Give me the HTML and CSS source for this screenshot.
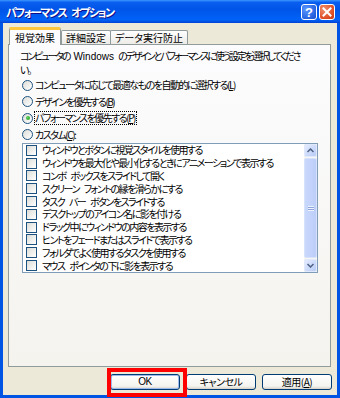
FILE: index.html
```html
<!DOCTYPE html>
<html>
	<head>
		<meta charset="UTF-8">
		<title>パフォーマンス オプション</title>
		<link rel="stylesheet" href="styles.css">
	</head>
	<body>
		<div class="window">
			<div class="titlebar">
				<span class="title">パフォーマンス オプション</span>
				<div class="caption">
					<span class="cbtn help">?</span>
					<span class="cbtn close">
						<svg width="10" height="10" viewBox="0 0 10 10"><path d="M1.5 1.5 L8.5 8.5 M8.5 1.5 L1.5 8.5" stroke="#fff" stroke-width="2" stroke-linecap="square"/></svg>
					</span>
				</div>
			</div>
			<div class="client">
				<div class="tabs">
					<div class="tab active">視覚効果</div>
					<div class="tab">詳細設定</div>
					<div class="tab">データ実行防止</div>
				</div>
				<div class="panel">
					<p class="desc">コンピュータの <span class="latin">Windows</span> のデザインとパフォーマンスに使う設定を選択してくださ<br>い。</p>
					<ul class="radios">
						<li><span class="radio"></span>コンピュータに応じて最適なものを自動的に選択する(<u>L</u>)</li>
						<li><span class="radio"></span>デザインを優先する(<u>B</u>)</li>
						<li><span class="radio on"></span><span class="focus">パフォーマンスを優先する(<u>P</u>)</span></li>
						<li><span class="radio"></span>カスタム(<u>C</u>):</li>
					</ul>
					<div class="listbox">
						<ul class="items">
							<li><span class="check"></span>ウィンドウとボタンに視覚スタイルを使用する</li>
							<li><span class="check"></span>ウィンドウを最大化や最小化するときにアニメーションで表示する</li>
							<li><span class="check"></span>コンボ ボックスをスライドして開く</li>
							<li><span class="check"></span>スクリーン フォントの縁を滑らかにする</li>
							<li><span class="check"></span>タスク バー ボタンをスライドする</li>
							<li><span class="check"></span>デスクトップのアイコン名に影を付ける</li>
							<li><span class="check"></span>ドラッグ中にウィンドウの内容を表示する</li>
							<li><span class="check"></span>ヒントをフェードまたはスライドで表示する</li>
							<li><span class="check"></span>フォルダでよく使用するタスクを使用する</li>
							<li><span class="check"></span>マウス ポインタの下に影を表示する</li>
						</ul>
						<div class="scrollbar">
							<span class="sbtn">
								<svg width="7" height="5" viewBox="0 0 7 5"><path d="M0.5 4 L3.5 1 L6.5 4" fill="none" stroke="#4d6185" stroke-width="1.5"/></svg>
							</span>
							<div class="track">
								<div class="thumb"><span class="grip"></span></div>
							</div>
							<span class="sbtn">
								<svg width="7" height="5" viewBox="0 0 7 5"><path d="M0.5 1 L3.5 4 L6.5 1" fill="none" stroke="#4d6185" stroke-width="1.5"/></svg>
							</span>
						</div>
					</div>
				</div>
				<div class="buttons">
					<span class="btn default">OK</span>
					<span class="btn">キャンセル</span>
					<span class="btn">適用(<u>A</u>)</span>
				</div>
			</div>
			<div class="highlight"></div>
		</div>
	</body>
</html>
```

FILE: styles.css
```css
body{
	margin: 0;
	font-family: "Noto Sans CJK JP", "Liberation Sans", sans-serif;
	font-size: 10px;
	font-feature-settings: "palt";
	color: #000;
}
ul{
	margin: 0;
	padding: 0;
	list-style: none;
}
.window{
	position: relative;
	width: 340px;
	height: 398px;
	box-sizing: border-box;
	display: flex;
	flex-direction: column;
	background-color: #0054e3;
	padding: 0 3px 3px 3px;
}
.titlebar{
	height: 23px;
	margin: 0 -3px;
	padding: 0 5px 0 6px;
	display: flex;
	align-items: center;
	justify-content: space-between;
	background: linear-gradient(#3d95ff 0, #0a5ff0 10%, #0055e8 40%, #0062f7 85%, #0050e0 95%, #003dd7 100%);
}
.title{
	color: #fff;
	font-weight: bold;
	font-size: 11px;
	letter-spacing: -1.5px;
	word-spacing: 4px;
	text-shadow: 1px 1px #0f1089;
}
.caption{
	display: flex;
	gap: 2px;
	margin-top: 1px;
}
.cbtn{
	width: 14px;
	height: 14px;
	border: 1px solid #fff;
	border-radius: 3px;
	display: flex;
	align-items: center;
	justify-content: center;
	color: #fff;
	font-family: "Liberation Sans", sans-serif;
	font-weight: bold;
	font-size: 13px;
}
.help{
	background: radial-gradient(circle at 30% 30%, #5a96ff, #2663e0 70%, #1d50c8);
}
.close{
	background: radial-gradient(circle at 30% 30%, #f0906e, #dd4a22 70%, #c23a12);
}
.client{
	flex: 1;
	background-color: #ece9d8;
	padding: 4px 6px 0 5px;
	display: flex;
	flex-direction: column;
}
.tabs{
	display: flex;
	align-items: flex-end;
	height: 17px;
	padding-left: 1px;
	position: relative;
	z-index: 1;
}
.tab{
	height: 13px;
	line-height: 13px;
	border: 1px solid #919b9c;
	border-bottom: none;
	border-radius: 2px 2px 0 0;
	background: linear-gradient(#fff, #ecebe6);
	padding: 0 4px;
	margin-right: -1px;
}
.tab.active{
	height: 15px;
	line-height: 16px;
	border-top: 3px solid #ffc83c;
	background: #fcfcfe;
	margin-bottom: -1px;
	padding: 0 5px;
	margin-right: 0;
}
.panel{
	height: 323px;
	box-sizing: border-box;
	border: 1px solid #919b9c;
	background: linear-gradient(#fcfcfe, #f4f3ee);
	padding: 4px 11px 0 11px;
	letter-spacing: -1.5px;
	word-spacing: 4px;
}
.desc{
	margin: 0;
	line-height: 13px;
	white-space: nowrap;
	letter-spacing: -2.15px;
}
.latin{
	font-family: "Liberation Sans", sans-serif;
	letter-spacing: 0;
}
.radios{
	margin-top: 1px;
	margin-left: 2px;
}
.radios li{
	height: 16.5px;
	line-height: 12px;
	display: flex;
	align-items: center;
	white-space: nowrap;
}
.radio{
	width: 9px;
	height: 9px;
	border: 1px solid #1c5180;
	border-radius: 50%;
	background: linear-gradient(135deg, #dcdcd7, #fff);
	margin-right: 2px;
	display: flex;
	align-items: center;
	justify-content: center;
}
.radio.on::after{
	content: "";
	width: 4px;
	height: 4px;
	border-radius: 50%;
	background: radial-gradient(circle at 35% 35%, #5ed05e, #21a121);
}
.focus{
	outline: 1px dotted #000;
	outline-offset: 0;
	padding-right: 1px;
}
.listbox{
	margin-left: 2px;
	width: 296px;
	height: 130px;
	box-sizing: border-box;
	border: 1px solid #7f9db9;
	background: #fff;
	display: flex;
}
.items{
	flex: 1;
	padding-left: 3px;
}
.items li{
	height: 12.8px;
	line-height: 12px;
	display: flex;
	align-items: center;
	white-space: nowrap;
}
.check{
	width: 9px;
	height: 9px;
	border: 1px solid #1c5180;
	background: linear-gradient(135deg, #dcdcd7, #fff);
	margin-right: 5px;
}
.scrollbar{
	width: 13px;
	display: flex;
	flex-direction: column;
	background: #f7f6f2;
}
.sbtn{
	height: 13px;
	box-sizing: border-box;
	border: 1px solid #e0e8fc;
	border-radius: 2px;
	background: linear-gradient(135deg, #e3ebff, #b9ccf6);
	display: flex;
	align-items: center;
	justify-content: center;
}
.track{
	flex: 1;
	padding: 1px 0;
}
.thumb{
	height: 100%;
	box-sizing: border-box;
	border: 1px solid #d6e1fb;
	border-radius: 2px;
	background: linear-gradient(90deg, #c9d8fc, #bccdf8);
	display: flex;
	align-items: center;
	justify-content: center;
}
.grip{
	width: 6px;
	height: 5px;
	background: repeating-linear-gradient(#eef3fe 0, #eef3fe 1px, #8ca3dc 1px, #8ca3dc 2px);
}
.buttons{
	display: flex;
	justify-content: flex-end;
	gap: 6px;
	margin-top: 7px;
	margin-right: -1px;
}
.btn{
	width: 70px;
	height: 16px;
	box-sizing: border-box;
	border: 1px solid #003c74;
	border-radius: 3px;
	background: linear-gradient(#fff, #f3f3ef 80%, #d6d0c5);
	display: flex;
	align-items: center;
	justify-content: center;
	line-height: 12px;
	letter-spacing: -0.5px;
}
.btn.default{
	box-shadow: inset 0 0 0 1px #9db9eb;
	font-family: "Liberation Sans", sans-serif;
}
.highlight{
	position: absolute;
	left: 107px;
	top: 368px;
	width: 80px;
	height: 29px;
	box-sizing: border-box;
	border: 4px solid #f00;
}
```
